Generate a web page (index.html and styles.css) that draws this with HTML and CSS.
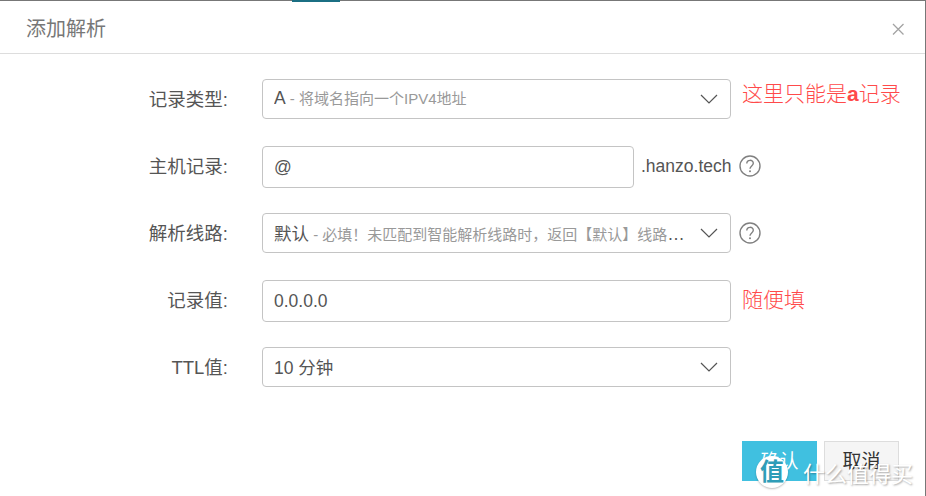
FILE: index.html
```html
<!DOCTYPE html>
<html lang="zh-CN">
<head>
    <meta charset="UTF-8">
    <title>添加解析</title>
    <link rel="stylesheet" href="styles.css">
</head>
<body>
    <div class="top-tab"></div>
    <div class="modal">
        <div class="modal-header">
            <h4>添加解析</h4>
            <svg class="close" width="14" height="14" viewBox="0 0 14 14"><path d="M2 2l10.500 10.500M12.500 2L2 12.500" stroke="#a3a3a3" stroke-width="1.300" fill="none"/></svg>
        </div>
        <div class="form">
            <div class="row">
                <label>记录类型:</label>
                <div class="field select">
                    <span class="text"><span class="value">A</span><span class="hint"> - 将域名指向一个IPV4地址</span></span>
                    <svg class="arrow" width="18" height="10" viewBox="0 0 18 10"><path d="M1 1l8 8 8-8" stroke="#555" stroke-width="1.200" fill="none"/></svg>
                </div>
                <span class="note note-high">这里只能是<b>a</b>记录</span>
            </div>
            <div class="row">
                <label>主机记录:</label>
                <div class="field tall short"><span class="value">@</span></div>
                <span class="suffix">.hanzo.tech</span>
                <svg class="help" width="22" height="22" viewBox="0 0 22 22"><circle cx="11" cy="11" r="10" stroke="#808080" stroke-width="1.400" fill="none"/><path d="M7.800 8.500c0-4.200 6.500-4.200 6.500-.2 0 2.600-3.300 2.700-3.300 5.400" stroke="#808080" stroke-width="1.400" fill="none"/><circle cx="11" cy="16.300" r="1" fill="#808080"/></svg>
            </div>
            <div class="row">
                <label>解析线路:</label>
                <div class="field select">
                    <span class="text"><span class="value">默认</span><span class="hint"> - 必填！未匹配到智能解析线路时，返回【默认】线路设置结果</span></span>
                    <svg class="arrow" width="18" height="10" viewBox="0 0 18 10"><path d="M1 1l8 8 8-8" stroke="#555" stroke-width="1.200" fill="none"/></svg>
                </div>
                <svg class="help" width="22" height="22" viewBox="0 0 22 22"><circle cx="11" cy="11" r="10" stroke="#808080" stroke-width="1.400" fill="none"/><path d="M7.800 8.500c0-4.200 6.500-4.200 6.500-.2 0 2.600-3.300 2.700-3.300 5.400" stroke="#808080" stroke-width="1.400" fill="none"/><circle cx="11" cy="16.300" r="1" fill="#808080"/></svg>
            </div>
            <div class="row">
                <label>记录值:</label>
                <div class="field tall"><span class="value">0.0.0.0</span></div>
                <span class="note">随便填</span>
            </div>
            <div class="row">
                <label>TTL值:</label>
                <div class="field select">
                    <span class="text"><span class="value">10 分钟</span></span>
                    <svg class="arrow" width="18" height="10" viewBox="0 0 18 10"><path d="M1 1l8 8 8-8" stroke="#555" stroke-width="1.200" fill="none"/></svg>
                </div>
            </div>
        </div>
        <div class="modal-footer">
            <button class="btn btn-primary">确认</button>
            <button class="btn">取消</button>
        </div>
    </div>
    <div class="watermark">
        <span class="badge">值</span>
        <span class="brand">什么值得买</span>
    </div>
</body>
</html>
```

FILE: styles.css
```css
* {
    box-sizing: border-box;
}
html, body {
    margin: 0;
    height: 100%;
    overflow: hidden;
}
body {
    position: relative;
    font-family: "Liberation Sans", "Noto Sans CJK SC", sans-serif;
    font-size: 17.500px;
    color: #555;
    background-color: #fff;
}
.top-tab {
    position: absolute;
    left: 292px;
    top: 0;
    width: 48px;
    height: 2px;
    background-color: #1b6f83;
}
.modal {
    height: 496px;
    border-top: 1px solid #777;
    border-right: 1px solid #777;
    background-color: #fff;
}
.modal-header {
    height: 53px;
    padding: 0 20px 0 26px;
    border-bottom: 1px solid #ddd;
    display: flex;
    align-items: center;
    justify-content: space-between;
}
.modal-header h4 {
    margin: 0;
    font-size: 20px;
    font-weight: 400;
    color: #777;
}
.close {
    margin-top: 3px;
}
.form {
    padding-top: 25px;
    display: flex;
    flex-direction: column;
    gap: 27px;
}
.row {
    height: 40px;
    display: flex;
    align-items: center;
}
.row label {
    width: 228px;
    margin-top: -3px;
    font-size: 18.500px;
    text-align: right;
    color: #555;
}
.field {
    width: 469px;
    height: 100%;
    margin-left: 34px;
    padding: 0 11px;
    border: 1px solid #c4c4c4;
    border-radius: 4px;
    display: flex;
    align-items: center;
    justify-content: space-between;
    gap: 12px;
    flex: none;
}
.field.tall {
    height: 42px;
    align-self: flex-start;
}
.field.short {
    width: 372px;
}
.value {
    font-size: 17.500px;
    color: #555;
}
.text {
    min-width: 0;
    margin-top: -2px;
    white-space: nowrap;
    overflow: hidden;
    text-overflow: ellipsis;
}
.hint {
    font-size: 15px;
    color: #999;
}
.arrow {
    flex: none;
    margin-right: 1px;
}
.suffix {
    margin-left: 7px;
    color: #555;
}
.help {
    margin-left: 8px;
    flex: none;
}
.note {
    margin-left: 11px;
    margin-top: -5px;
    font-size: 21px;
    font-weight: 300;
    color: #ff4a4a;
}
.note b {
    font-weight: 700;
}
.note-high {
    margin-top: -14px;
}
.modal-footer {
    margin-top: 54px;
    padding-right: 26px;
    display: flex;
    justify-content: flex-end;
    gap: 7px;
}
.btn {
    width: 75px;
    height: 40px;
    border: 1px solid #ddd;
    background-color: #f5f5f5;
    color: #333;
    font-family: inherit;
    font-size: 19px;
    padding: 0 0 4px;
}
.btn-primary {
    border-color: #40c0e0;
    background-color: #40c0e0;
    color: #fff;
}
.watermark {
    position: absolute;
    left: 756px;
    top: 453px;
    display: flex;
    align-items: center;
    gap: 15px;
}
.badge {
    width: 32px;
    height: 32px;
    border-radius: 50%;
    background-color: #fff;
    color: #2f9db8;
    font-size: 24px;
    font-weight: 700;
    line-height: 32px;
    text-align: center;
    box-shadow: 0 1px 2px rgba(0,0,0,0.25);
}
.brand {
    font-size: 22px;
    line-height: 32px;
    color: #fff;
    margin-top: 6px;
    text-shadow: 1px 1px 2px rgba(0,0,0,0.35);
    white-space: nowrap;
}
```
